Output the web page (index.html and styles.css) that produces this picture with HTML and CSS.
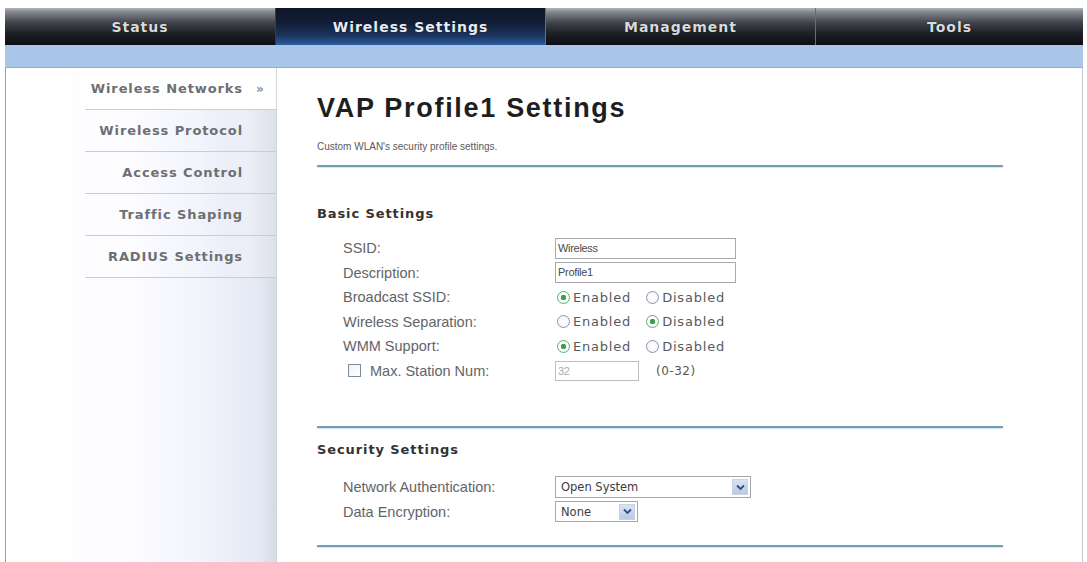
FILE: index.html
```html
<!DOCTYPE html>
<html>
<head>
<meta charset="utf-8">
<link rel="stylesheet" href="styles.css">
</head>
<body>
<div class="page">
  <nav class="tabs">
    <div class="tab">Status</div>
    <div class="tab active">Wireless Settings</div>
    <div class="tab">Management</div>
    <div class="tab">Tools</div>
  </nav>
  <div class="subbar"></div>
  <div class="frame">
    <aside class="side">
      <div class="item current"><span class="txt">Wireless Networks</span><span class="mark">&raquo;</span></div>
      <div class="item"><span class="txt">Wireless Protocol</span><span class="mark"></span></div>
      <div class="item"><span class="txt">Access Control</span><span class="mark"></span></div>
      <div class="item"><span class="txt">Traffic Shaping</span><span class="mark"></span></div>
      <div class="item"><span class="txt">RADIUS Settings</span><span class="mark"></span></div>
    </aside>
    <main class="content">
      <h1 class="title">VAP Profile1 Settings</h1>
      <p class="sub">Custom WLAN's security profile settings.</p>
      <div class="rule first"></div>
      <h2 class="sect">Basic Settings</h2>
      <div class="form">
        <div class="row"><span class="lbl">SSID:</span><span class="field"><span class="input">Wireless</span></span></div>
        <div class="row"><span class="lbl">Description:</span><span class="field"><span class="input">Profile1</span></span></div>
        <div class="row"><span class="lbl">Broadcast SSID:</span><span class="field"><span class="radio on"></span><span class="opt">Enabled</span><span class="radio"></span><span class="opt">Disabled</span></span></div>
        <div class="row"><span class="lbl">Wireless Separation:</span><span class="field"><span class="radio"></span><span class="opt">Enabled</span><span class="radio on"></span><span class="opt">Disabled</span></span></div>
        <div class="row"><span class="lbl">WMM Support:</span><span class="field"><span class="radio on"></span><span class="opt">Enabled</span><span class="radio"></span><span class="opt">Disabled</span></span></div>
        <div class="row"><span class="lbl chk"><span class="checkbox"></span>Max. Station Num:</span><span class="field"><span class="input small disabled">32</span><span class="range">(0-32)</span></span></div>
      </div>
      <div class="rule second"></div>
      <h2 class="sect">Security Settings</h2>
      <div class="form sec">
        <div class="row"><span class="lbl">Network Authentication:</span><span class="field"><span class="select wide"><span class="val">Open System</span><span class="arrow"><svg width="9" height="7" viewBox="0 0 9 7"><path d="M1 1.5 L4.5 5 L8 1.5" fill="none" stroke="#2b4f8c" stroke-width="1.8"/></svg></span></span></span></div>
        <div class="row"><span class="lbl">Data Encryption:</span><span class="field"><span class="select narrow"><span class="val">None</span><span class="arrow"><svg width="9" height="7" viewBox="0 0 9 7"><path d="M1 1.5 L4.5 5 L8 1.5" fill="none" stroke="#2b4f8c" stroke-width="1.8"/></svg></span></span></span></div>
      </div>
      <div class="rule third"></div>
    </main>
  </div>
</div>
</body>
</html>
```
FILE: styles.css
```css
html, body {
  margin: 0;
  padding: 0;
  background: #fff;
}
body {
  font-family: "Liberation Sans", Arial, sans-serif;
  overflow: hidden;
}
.page {
  padding: 8px 0 0 5px;
  width: 1078px;
}
.tabs {
  display: grid;
  grid-template-columns: 270px 270px 270px 268px;
  height: 37px;
}
.tab {
  display: flex;
  align-items: center;
  justify-content: center;
  font-family: "DejaVu Sans", Verdana, sans-serif;
  font-weight: bold;
  font-size: 14px;
  letter-spacing: 1px;
  color: #d8dadd;
  text-shadow: 0 0 1px #000;
  background: linear-gradient(to bottom, #b0b4ba 0%, #868a91 10%, #43464d 38%, #1d2026 68%, #0c0e13 100%);
  border-left: 1px solid #6a6d73;
  box-sizing: border-box;
}
.tab:first-child { border-left: none; }
.tab.active {
  color: #e8ecf4;
  background: linear-gradient(to bottom, #0e1627 0%, #111d36 40%, #1b3560 75%, #2f5e9e 100%);
  border-left: 1px solid #2a3d5c;
}
.subbar {
  height: 22px;
  background: #a9c6e8;
  border-bottom: 1px solid #8eaed6;
}
.frame {
  display: flex;
  height: 494px;
  border-left: 1px solid #9a9ea6;
  border-right: 1px solid #c4c8d0;
}
.side {
  width: 270px;
  flex: none;
  background: linear-gradient(to right, #ffffff 0%, #fdfdff 45%, #f2f4fb 72%, #e4e8f4 94%, #d7dbe6 100%);
  border-right: 1px solid #d3d7e0;
  display: flex;
  flex-direction: column;
  align-items: flex-end;
}
.item {
  width: 191px;
  height: 41px;
  border-bottom: 1px solid #c9ccd2;
  display: flex;
  align-items: center;
  justify-content: flex-end;
  font-family: "DejaVu Sans", Verdana, sans-serif;
  font-weight: bold;
  font-size: 13px;
  letter-spacing: 0.9px;
  color: #6c6f74;
  background: linear-gradient(to right, rgba(255,255,255,0) 0%, rgba(255,255,255,0) 60%, #eceff6 85%, #dde1ea 100%);
}
.item.current {
  background: #fff;
}
.item .mark {
  width: 33px;
  flex: none;
  font-size: 12px;
  color: #7890b0;
  text-align: left;
  padding-left: 13px;
  box-sizing: border-box;
}
.content {
  flex: 1;
  padding: 25px 0 0 40px;
  background: #fff;
}
.title {
  margin: 0;
  font-size: 27px;
  line-height: 31px;
  font-weight: bold;
  letter-spacing: 1.7px;
  color: #1e1e20;
}
.sub {
  margin: 16px 0 0;
  font-size: 10px;
  line-height: 14px;
  color: #5a5a5c;
}
.rule {
  width: 686px;
  height: 2px;
  background: #6f9fb8;
  box-shadow: 0 1px 1px #d4e4ec;
}
.rule.first { margin-top: 11px; }
.rule.second { margin-top: 43px; }
.rule.third { margin-top: 21px; }
.sect {
  margin: 38px 0 0;
  font-family: "DejaVu Sans", Verdana, sans-serif;
  font-size: 13px;
  line-height: 18px;
  font-weight: bold;
  letter-spacing: 0.9px;
  color: #333;
}
.rule.second + .sect { margin-top: 13px; }
.form {
  margin-top: 13px;
  padding-left: 26px;
}
.form.sec { margin-top: 16px; }
.row {
  height: 24.5px;
  display: flex;
  align-items: center;
}
.lbl {
  width: 212px;
  flex: none;
  font-size: 14.5px;
  color: #636468;
  display: flex;
  align-items: center;
}
.lbl.chk { padding-left: 5px; box-sizing: border-box; }
.checkbox {
  width: 11px;
  height: 11px;
  border: 1px solid #7d8a98;
  background: linear-gradient(135deg, #eef0f3, #fff);
  margin-right: 9px;
}
.field {
  display: flex;
  align-items: center;
}
.input {
  width: 177px;
  height: 19px;
  border: 1px solid #a7a9ad;
  box-sizing: content-box;
  font-size: 11px;
  line-height: 19px;
  padding-left: 2px;
  color: #4a4a4c;
  letter-spacing: -0.3px;
}
.input.small {
  width: 80px;
  height: 18px;
  line-height: 18px;
  border-color: #bdbfc3;
}
.input.disabled { color: #a9abaf; }
.range {
  margin-left: 17px;
  font-family: "DejaVu Sans", Verdana, sans-serif;
  font-size: 12px;
  letter-spacing: 0.5px;
  color: #555;
}
.radio {
  width: 11px;
  height: 11px;
  border: 1px solid #8b93ac;
  border-radius: 50%;
  background: radial-gradient(circle, #ffffff 0%, #f1f2f5 100%);
  margin-left: 2px;
  margin-right: 3px;
  flex: none;
}
.radio.on {
  border-color: #5fae73;
  background: radial-gradient(circle, #3f9e55 0, #3f9e55 2.6px, #ffffff 3px, #f1f6f2 100%);
}
.opt {
  font-family: "DejaVu Sans", Verdana, sans-serif;
  font-size: 13px;
  letter-spacing: 0.8px;
  color: #585a60;
  margin-right: 13px;
}
.select {
  display: flex;
  align-items: center;
  height: 20px;
  border: 1px solid #a3a8b0;
  box-sizing: content-box;
  font-family: "DejaVu Sans", Verdana, sans-serif;
  font-size: 11.5px;
  color: #3c3c40;
}
.select.wide { width: 194px; }
.select.narrow { width: 81px; height: 19px; }
.select .val { flex: 1; padding-left: 5px; }
.select .arrow {
  width: 16px;
  height: 16px;
  margin-right: 2px;
  background: linear-gradient(to bottom, #dbe3f2, #bac8e2);
  border: 1px solid #c8d2e4;
  box-sizing: border-box;
  display: flex;
  align-items: center;
  justify-content: center;
}
```
